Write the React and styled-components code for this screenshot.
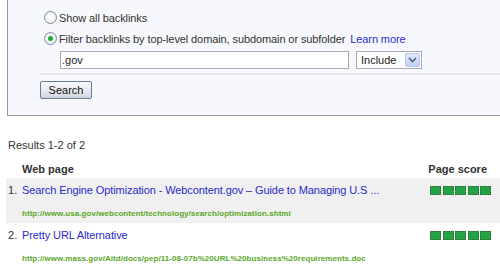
import React from 'react'
import styled, { createGlobalStyle } from 'styled-components'

const GlobalStyle = createGlobalStyle`
body {
  margin: 0;
  background: #fff;
  font-family: "Liberation Sans", Arial, sans-serif;
  color: #333;
  width: 500px;
  height: 278px;
  overflow: hidden;
}
`

const Panel = styled.div`
margin-left: 7px;
border-left: 1px solid #9a9a9a;
border-bottom: 1px solid #9a9a9a;
background: #f7f8fd;
padding: 7px 0 16px 32px;
`

const OptionRow = styled.label`
display: flex;
align-items: center;
height: 21px;
margin-left: 4px;
font-size: 11px;
letter-spacing: -0.1px;
color: #333;
`

const Radio = styled.span`
box-sizing: border-box;
width: 13px;
height: 13px;
margin-right: 2px;
border-radius: 50%;
border: 1px solid #7a8aa0;
background: radial-gradient(circle at 40% 40%, #ffffff 0%, #e6e8ec 100%);
display: flex;
align-items: center;
justify-content: center;
&::after {
  content: '';
  width: 5px;
  height: 5px;
  border-radius: 50%;
  background: ${p => (p.$checked ? '#22a83a' : 'transparent')};
}
`

const LearnMore = styled.a`
margin-left: 5px;
color: #2a2acc;
text-decoration: none;
`

const InputRow = styled.div`
display: flex;
align-items: center;
gap: 7px;
margin: 2px 0 0 20px;
`

const TextField = styled.div`
box-sizing: border-box;
width: 289px;
height: 18px;
border: 1px solid #a5acb2;
background: #fff;
font-size: 11px;
line-height: 16px;
padding-left: 1px;
color: #222;
`

const Select = styled.div`
box-sizing: border-box;
width: 66px;
height: 18px;
border: 1px solid #a5acb2;
background: #fff;
font-size: 11px;
display: flex;
align-items: center;
justify-content: space-between;
padding: 0 1px 0 4px;
color: #222;
`

const Arrow = styled.span`
box-sizing: border-box;
width: 15px;
height: 14px;
border: 1px solid #b8c8ec;
border-radius: 2px;
background: linear-gradient(#e0e8fb, #c2d0f2);
display: flex;
align-items: center;
justify-content: center;
`

const Divider = styled.div`
height: 2px;
background: #e8e9ee;
margin-top: 4px;
`

const Button = styled.button`
display: block;
margin-top: 6px;
width: 52px;
height: 18px;
padding: 0;
font-family: inherit;
font-size: 11px;
color: #111;
border: 1px solid #6a7c9c;
border-radius: 2px;
background: linear-gradient(#fbfbfd, #e6e8ee 60%, #cfd3dd);
`

const Results = styled.div`
font-size: 11px;
color: #333;
margin: 23px 0 0 8px;
`

const Table = styled.div`
margin: 8px 0 0 6px;
`

const HeadRow = styled.div`
display: flex;
justify-content: space-between;
align-items: center;
height: 19px;
padding: 0 13px 0 16px;
font-size: 11px;
font-weight: bold;
color: #333;
`

const Row = styled.div`
height: 45px;
background: ${p => (p.$shaded ? '#f0f0f0' : 'transparent')};
display: grid;
grid-template-columns: 16px 1fr auto;
grid-template-rows: 24px 21px;
padding-right: 9px;
`

const Num = styled.span`
font-size: 11px;
color: #333;
padding: 6px 0 0 2px;
`

const Title = styled.a`
font-size: 11px;
letter-spacing: -0.1px;
color: #2a2acc;
text-decoration: none;
padding-top: 6px;
white-space: nowrap;
`

const Url = styled.span`
grid-column: 2 / 4;
font-size: 8px;
font-weight: bold;
color: #5aa82a;
letter-spacing: 0.05px;
padding-top: 7px;
`

const Score = styled.div`
display: flex;
gap: 1.5px;
padding-top: 8px;
`

const Box = styled.span`
box-sizing: border-box;
width: 11px;
height: 9px;
background: #22a344;
border: 1px dotted #3d5a3d;
`

const rows = [
  {
    title: 'Search Engine Optimization - Webcontent.gov \u2013 Guide to Managing U.S ...',
    url: 'http://www.usa.gov/webcontent/technology/search/optimization.shtml',
  },
  {
    title: 'Pretty URL Alternative',
    url: 'http://www.mass.gov/Aitd/docs/pep/11-08-07b%20URL%20business%20requirements.doc',
  },
]

export default function App() {
  return (
    <>
      <GlobalStyle />
      <Panel>
        <OptionRow>
          <Radio />
          Show all backlinks
        </OptionRow>
        <OptionRow>
          <Radio $checked />
          Filter backlinks by top-level domain, subdomain or subfolder
          <LearnMore href="#">Learn more</LearnMore>
        </OptionRow>
        <InputRow>
          <TextField>.gov</TextField>
          <Select>
            Include
            <Arrow>
              <svg width="9" height="6" viewBox="0 0 9 6">
                <path d="M1 1 L4.5 4.5 L8 1" fill="none" stroke="#4d6185" strokeWidth="1.6" />
              </svg>
            </Arrow>
          </Select>
        </InputRow>
        <Divider />
        <Button>Search</Button>
      </Panel>
      <Results>Results 1-2 of 2</Results>
      <Table>
        <HeadRow>
          <span>Web page</span>
          <span>Page score</span>
        </HeadRow>
        {rows.map((r, i) => (
          <Row key={i} $shaded={i === 0}>
            <Num>{i + 1}.</Num>
            <Title href="#">{r.title}</Title>
            <Score>
              {[0, 1, 2, 3, 4].map(n => <Box key={n} />)}
            </Score>
            <span />
            <Url>{r.url}</Url>
          </Row>
        ))}
      </Table>
    </>
  )
}
